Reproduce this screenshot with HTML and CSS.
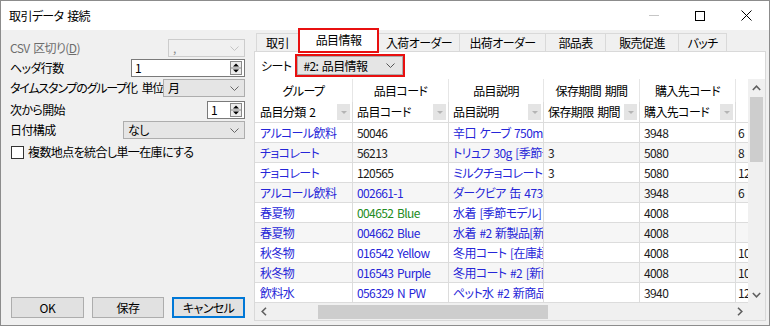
FILE: index.html
```html
<!DOCTYPE html>
<html lang="ja">
<head>
<meta charset="utf-8">
<link rel="stylesheet" href="styles.css">
</head>
<body>
<div class="window">
  <div class="titlebar">
    <span class="title">取引データ 接続</span>
    <div class="controls">
      <div class="ctl"><svg width="10" height="1" viewBox="0 0 10 1"><rect width="10" height="1" fill="#c6c6c6"/></svg></div>
      <div class="ctl"><svg width="10" height="10" viewBox="0 0 10 10"><rect x="0.5" y="0.5" width="9" height="9" fill="none" stroke="#000"/></svg></div>
      <div class="ctl"><svg width="11" height="11" viewBox="0 0 11 11"><path d="M0.5 0.5L10.5 10.5M10.5 0.5L0.5 10.5" stroke="#000" stroke-width="1"/></svg></div>
    </div>
  </div>
  <div class="body">
    <div class="left">
      <div class="row">
        <span class="lbl disabled">CSV 区切り(<u>D</u>)</span>
        <div class="combo disabled w77"><span>,</span><svg width="9" height="5" viewBox="0 0 9 5"><polyline points="0.5,0.5 4.5,4.5 8.5,0.5" fill="none" stroke="#c4c4c4"/></svg></div>
      </div>
      <div class="row">
        <span class="lbl">ヘッダ行数</span>
        <div class="spin w114"><span>1</span><svg class="spinbtn" width="12" height="14" viewBox="0 0 12 14"><rect x="0.5" y="0.5" width="11" height="13" fill="#ececec" stroke="#8a8a8a"/><line x1="1" y1="7" x2="11" y2="7" stroke="#8a8a8a"/><path d="M3 5.5L9 5.5L6 2.5Z" fill="#000"/><path d="M3 8.5L9 8.5L6 11.5Z" fill="#000"/></svg></div>
      </div>
      <div class="row tall">
        <span class="lbl narrow">タイムスタンプのグループ化 単位</span>
        <div class="combo w85"><span>月</span><svg width="9" height="5" viewBox="0 0 9 5"><polyline points="0.5,0.5 4.5,4.5 8.5,0.5" fill="none" stroke="#666"/></svg></div>
      </div>
      <div class="row">
        <span class="lbl">次から開始</span>
        <div class="spin w38"><span>1</span><svg class="spinbtn" width="12" height="14" viewBox="0 0 12 14"><rect x="0.5" y="0.5" width="11" height="13" fill="#ececec" stroke="#8a8a8a"/><line x1="1" y1="7" x2="11" y2="7" stroke="#8a8a8a"/><path d="M3 5.5L9 5.5L6 2.5Z" fill="#000"/><path d="M3 8.5L9 8.5L6 11.5Z" fill="#000"/></svg></div>
      </div>
      <div class="row tall">
        <span class="lbl">日付構成</span>
        <div class="combo w122"><span>なし</span><svg width="9" height="5" viewBox="0 0 9 5"><polyline points="0.5,0.5 4.5,4.5 8.5,0.5" fill="none" stroke="#666"/></svg></div>
      </div>
      <div class="check">
        <span class="box"></span>
        <span class="lbl">複数地点を統合し単一在庫にする</span>
      </div>
      <div class="buttons">
        <div class="btn">OK</div>
        <div class="btn">保存</div>
        <div class="btn default">キャンセル</div>
      </div>
    </div>

    <div class="right">
      <div class="tabs">
        <div class="tab t1">取引</div>
        <div class="tab sel">品目情報</div>
        <div class="tab t3">入荷オーダー</div>
        <div class="tab t4">出荷オーダー</div>
        <div class="tab t5">部品表</div>
        <div class="tab t6">販売促進</div>
        <div class="tab t7">バッチ</div>
      </div>
      <div class="pane">
        <div class="sheetrow">
          <span class="lbl">シート</span>
          <div class="sheetsel">
            <div class="combo full"><span>#2: 品目情報</span><svg width="9" height="5" viewBox="0 0 9 5"><polyline points="0.5,0.5 4.5,4.5 8.5,0.5" fill="none" stroke="#555"/></svg></div>
          </div>
        </div>
        <div class="grid">
          <div class="gridmain">
            <div class="tablewrap">
              <div class="tr head">
                <div class="c c1">グループ</div>
                <div class="c c2">品目コード</div>
                <div class="c c3">品目説明</div>
                <div class="c c4">保存期間 期間</div>
                <div class="c c5">購入先コード</div>
                <div class="c c6"></div>
              </div>
              <div class="tr filter">
                <div class="c c1"><span>品目分類 2</span><span class="fbtn"></span></div>
                <div class="c c2"><span>品目コード</span><span class="fbtn"></span></div>
                <div class="c c3"><span>品目説明</span><span class="fbtn"></span></div>
                <div class="c c4"><span>保存期限 期間</span><span class="fbtn"></span></div>
                <div class="c c5"><span>購入先コード</span><span class="fbtn"></span></div>
                <div class="c c6"></div>
              </div>
              <div class="tr">
                <div class="c c1 blue">アルコール飲料</div>
                <div class="c c2">50046</div>
                <div class="c c3 blue">辛口 ケーブ 750ml [</div>
                <div class="c c4"></div>
                <div class="c c5">3948</div>
                <div class="c c6">6</div>
              </div>
              <div class="tr alt">
                <div class="c c1 blue">チョコレート</div>
                <div class="c c2">56213</div>
                <div class="c c3 blue">トリュフ 30g [季節モ</div>
                <div class="c c4">3</div>
                <div class="c c5">5080</div>
                <div class="c c6">8</div>
              </div>
              <div class="tr">
                <div class="c c1 blue">チョコレート</div>
                <div class="c c2">120565</div>
                <div class="c c3 blue">ミルクチョコレートバー</div>
                <div class="c c4">3</div>
                <div class="c c5">5080</div>
                <div class="c c6">12</div>
              </div>
              <div class="tr alt">
                <div class="c c1 blue">アルコール飲料</div>
                <div class="c c2 blue">002661-1</div>
                <div class="c c3 blue">ダークビア 缶 473 ml</div>
                <div class="c c4"></div>
                <div class="c c5">3948</div>
                <div class="c c6">6</div>
              </div>
              <div class="tr">
                <div class="c c1 blue">春夏物</div>
                <div class="c c2 green">004652 Blue</div>
                <div class="c c3 blue">水着 [季節モデル]</div>
                <div class="c c4"></div>
                <div class="c c5">4008</div>
                <div class="c c6"></div>
              </div>
              <div class="tr alt">
                <div class="c c1 blue">春夏物</div>
                <div class="c c2 blue">004662 Blue</div>
                <div class="c c3 blue">水着 #2 新製品[新</div>
                <div class="c c4"></div>
                <div class="c c5">4008</div>
                <div class="c c6"></div>
              </div>
              <div class="tr">
                <div class="c c1 blue">秋冬物</div>
                <div class="c c2 blue">016542 Yellow</div>
                <div class="c c3 blue">冬用コート [在庫超</div>
                <div class="c c4"></div>
                <div class="c c5">4008</div>
                <div class="c c6">10</div>
              </div>
              <div class="tr alt">
                <div class="c c1 blue">秋冬物</div>
                <div class="c c2 blue">016543 Purple</div>
                <div class="c c3 blue">冬用コート #2 [新商</div>
                <div class="c c4"></div>
                <div class="c c5">4008</div>
                <div class="c c6">10</div>
              </div>
              <div class="tr">
                <div class="c c1 blue">飲料水</div>
                <div class="c c2 blue">056329 N PW</div>
                <div class="c c3 blue">ペット水 #2 新商品</div>
                <div class="c c4"></div>
                <div class="c c5">3940</div>
                <div class="c c6">12</div>
              </div>
            </div>
            <div class="hscroll">
              <div class="sbtn"><svg width="6" height="9" viewBox="0 0 6 9"><polyline points="5,0.8 1.2,4.5 5,8.2" fill="none" stroke="#606060" stroke-width="1.6"/></svg></div>
              <div class="htrack"><div class="hthumb"></div></div>
              <div class="sbtn"><svg width="6" height="9" viewBox="0 0 6 9"><polyline points="1,0.8 4.8,4.5 1,8.2" fill="none" stroke="#606060" stroke-width="1.6"/></svg></div>
            </div>
          </div>
          <div class="vscroll">
            <div class="vtrack">
              <div class="sbtn"><svg width="9" height="6" viewBox="0 0 9 6"><polyline points="0.8,5 4.5,1.2 8.2,5" fill="none" stroke="#606060" stroke-width="1.6"/></svg></div>
              <div class="vthumb"></div>
              <div class="vspace"></div>
              <div class="sbtn"><svg width="9" height="6" viewBox="0 0 9 6"><polyline points="0.8,1 4.5,4.8 8.2,1" fill="none" stroke="#606060" stroke-width="1.6"/></svg></div>
            </div>
            <div class="corner"></div>
          </div>
        </div>
      </div>
    </div>
  </div>
</div>
</body>
</html>
```
FILE: styles.css
```css
* { box-sizing: border-box; margin: 0; padding: 0; }
html, body { background: #ffffff; }
body {
  margin: 0;
  font-family: "Noto Sans CJK JP", sans-serif;
  font-size: 12px;
  font-feature-settings: "palt";
  letter-spacing: -0.6px;
  word-spacing: 1.5px;
  color: #000;
}
.window {
  width: 770px;
  height: 326px;
  border: 1px solid #8c8c8c;
  background: #f0f0f0;
  display: flex;
  flex-direction: column;
  overflow: hidden;
}
.titlebar {
  flex: none;
  height: 29px;
  background: #fff;
  display: flex;
  align-items: center;
  padding-left: 8px;
}
.title { flex: 1; line-height: 16px; }
.controls { display: flex; }
.ctl {
  width: 46px;
  height: 29px;
  display: flex;
  align-items: center;
  justify-content: center;
}
.body { flex: 1; display: flex; min-height: 0; }

/* left panel */
.left {
  width: 253px;
  flex: none;
  padding: 9px 9px 7px 9px;
  display: flex;
  flex-direction: column;
}
.row {
  height: 20px;
  display: flex;
  align-items: flex-start;
  justify-content: space-between;
}
.row.tall { height: 22px; }
.lbl { line-height: 18px; white-space: nowrap; }
.lbl.narrow { letter-spacing: -1.2px; word-spacing: 3px; }
.lbl.disabled { color: #6d6d6d; }
.combo {
  height: 18px;
  border: 1px solid #adadad;
  background: #e5e5e5;
  display: flex;
  align-items: center;
  justify-content: space-between;
  padding: 0 5px 0 4px;
  line-height: 16px;
}
.combo.disabled { background: #f0f0f0; border-color: #cccccc; color: #8a8a8a; }
.w77 { width: 77px; }
.w85 { width: 85px; }
.w122 { width: 122px; }
.w114 { width: 114px; }
.w38 { width: 38px; }
.spin {
  height: 18px;
  border: 1px solid #7a7a7a;
  background: #fff;
  display: flex;
  align-items: center;
  justify-content: space-between;
  padding: 0 2px 0 3px;
  line-height: 16px;
}
.check {
  margin-top: 1px;
  display: flex;
  align-items: center;
  gap: 4px;
  height: 16px;
}
.box {
  width: 13px;
  height: 13px;
  border: 1px solid #333;
  background: #fff;
  margin-left: 1px;
}
.buttons {
  margin-top: auto;
  display: flex;
  gap: 8px;
  padding-left: 1px;
}
.btn {
  width: 73px;
  height: 21px;
  border: 1px solid #adadad;
  background: #e1e1e1;
  display: flex;
  align-items: center;
  justify-content: center;
  line-height: 16px;
}
.btn.default { border: 2px solid #0078d7; }

/* right panel */
.right {
  flex: 1;
  display: flex;
  flex-direction: column;
  padding-right: 3px;
}
.tabs {
  flex: none;
  height: 21px;
  display: flex;
  align-items: flex-end;
  padding-left: 2px;
}
.tab {
  height: 18px;
  border: 1px solid #d9d9d9;
  border-bottom: none;
  background: #f0f0f0;
  margin-left: -1px;
  display: flex;
  align-items: center;
  justify-content: center;
  line-height: 16px;
  white-space: nowrap;
}
.tab.t1 { width: 43px; margin-left: 0; }
.tab.sel {
  width: 81px;
  height: 25px;
  margin-bottom: -2px;
  background: #fff;
  border: 2px solid #e81010;
  position: relative;
  z-index: 2;
  padding-bottom: 2px;
}
.tab.t3 { width: 82px; }
.tab.t4 { width: 87px; }
.tab.t5 { width: 61px; }
.tab.t6 { width: 74px; }
.tab.t7 { width: 49px; }
.pane {
  height: 270px;
  border: 1px solid #d9d9d9;
  background: #fff;
  display: flex;
  flex-direction: column;
}
.sheetrow {
  flex: none;
  height: 27px;
  display: flex;
  align-items: center;
  padding-left: 6px;
  gap: 4px;
}
.sheetsel {
  width: 110px;
  height: 23px;
  border: 2px solid #e81010;
}
.combo.full { width: 100%; height: 100%; padding: 0 7px 0 5px; }

.grid { display: flex; height: 241px; }
.gridmain {
  width: 493px;
  display: flex;
  flex-direction: column;
  overflow: hidden;
}
.tablewrap { height: 224px; overflow: hidden; }
.tr {
  display: flex;
  width: 540px;
  height: 20px;
  border-bottom: 1px solid #dcdcdc;
}
.tr.alt { background: #f6f6f6; }
.tr.head { height: 23px; border-bottom: none; }
.tr.filter { height: 21px; }
.c {
  flex: none;
  border-right: 1px solid #dcdcdc;
  padding-left: 4px;
  line-height: 19px;
  white-space: nowrap;
  overflow: hidden;
  color: #1a1a1a;
}
.head .c {
  padding-left: 0;
  text-align: center;
  line-height: 23px;
  color: #000;
  border-right-color: #e6e6e6;
}
.filter .c {
  display: flex;
  align-items: center;
  justify-content: space-between;
  padding-right: 2px;
  line-height: 18px;
  color: #000;
}
.fbtn {
  width: 13px;
  height: 16px;
  background: #e4e4e4;
  display: flex;
  align-items: center;
  justify-content: center;
}
.fbtn::after {
  content: "";
  border-left: 3px solid transparent;
  border-right: 3px solid transparent;
  border-top: 3px solid #b4b4b4;
}
.c1 { width: 98px; padding-left: 5px; }
.c2 { width: 96px; }
.c3 { width: 95px; }
.c4 { width: 96px; }
.c5 { width: 96px; }
.c6 { width: 59px; border-right: none; padding-left: 2px; }
.blue { color: #2626d8; }
.green { color: #228b22; }

.hscroll {
  height: 17px;
  background: #f0f0f0;
  display: flex;
}
.sbtn {
  width: 17px;
  height: 17px;
  flex: none;
  display: flex;
  align-items: center;
  justify-content: center;
}
.htrack { flex: 1; padding: 2px 0 1px 46px; }
.hthumb { width: 230px; height: 100%; background: #cdcdcd; }
.vscroll {
  width: 17px;
  display: flex;
  flex-direction: column;
  background: #f0f0f0;
}
.vtrack { height: 224px; display: flex; flex-direction: column; }
.vthumb {
  height: 65px;
  margin: 1px 2px 0 2px;
  background: #cdcdcd;
}
.vspace { flex: 1; }
.corner { height: 17px; background: #f0f0f0; }
```
